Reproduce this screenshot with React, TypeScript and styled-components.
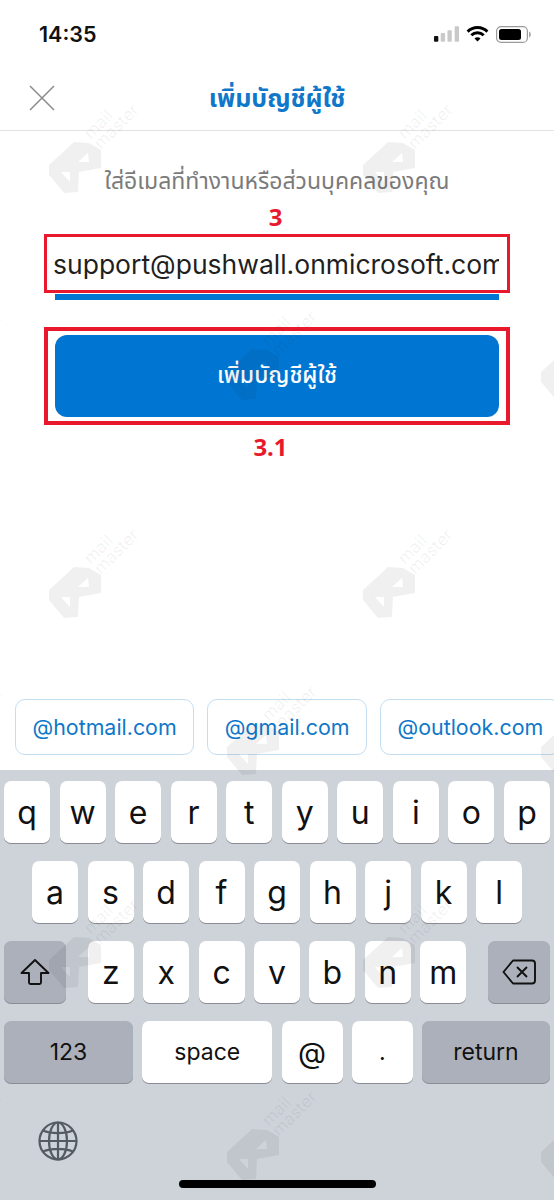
import { createGlobalStyle, styled } from 'styled-components';

const BLUE = '#0076d2';
const RED = '#e8192c';
const UI_FONT = 'Inter, "Noto Sans", "Noto Sans Thai", "Liberation Sans", sans-serif';
const LABEL_FONT = '"Noto Sans", "DejaVu Sans", sans-serif';

const MARKS = [
  [46, 140], [360, 140],
  [-90, 347], [224, 347], [538, 347],
  [46, 565], [360, 565],
  [-90, 722], [224, 722], [538, 722],
  [46, 935], [360, 935],
  [-90, 1127], [224, 1127], [538, 1127],
];

const ROW_ONE = ['q', 'w', 'e', 'r', 't', 'y', 'u', 'i', 'o', 'p'];
const ROW_TWO = ['a', 's', 'd', 'f', 'g', 'h', 'j', 'k', 'l'];
const ROW_THREE = ['z', 'x', 'c', 'v', 'b', 'n', 'm'];
const DOMAINS = ['@hotmail.com', '@gmail.com', '@outlook.com'];

export default function App() {
  return (
    <Page>
      <GlobalStyle />
      <StatusBar>
        <Clock>14:35</Clock>
        <StatusIcons>
          <svg width="25" height="16" viewBox="0 0 26 16">
            <rect x="0" y="10" width="4.5" height="6" rx="1" fill="#111" />
            <rect x="7" y="7" width="4.5" height="9" rx="1" fill="#c9c9c9" />
            <rect x="14" y="4" width="4.5" height="12" rx="1" fill="#c9c9c9" />
            <rect x="21.5" y="0" width="4.5" height="16" rx="1" fill="#c9c9c9" />
          </svg>
          <svg width="23" height="16" viewBox="0 0 23 16" fill="none" stroke="#000" strokeWidth="2.9">
            <path d="M1.6 5.6a14 14 0 0 1 19.8 0" />
            <path d="M5.3 9.3a8.8 8.8 0 0 1 12.4 0" />
            <path d="M11.5 15.6l-3-3a4.2 4.2 0 0 1 6 0z" fill="#000" stroke="none" />
          </svg>
          <svg width="35" height="17" viewBox="0 0 35 17">
            <rect x="0.6" y="0.6" width="30.8" height="15.8" rx="4.5" fill="none" stroke="#9a9a9a" strokeWidth="1.2" />
            <rect x="3" y="3" width="22" height="11" rx="2.5" fill="#000" />
            <path d="M33 5.5c1.2.4 1.8 1.6 1.8 3s-.6 2.6-1.8 3z" fill="#a5a5a5" />
          </svg>
        </StatusIcons>
      </StatusBar>

      <NavBar>
        <CloseIcon width="26" height="26" viewBox="0 0 26 26">
          <path d="M1 1l24 24M25 1L1 25" stroke="#8a8a8a" strokeWidth="1.5" fill="none" />
        </CloseIcon>
        <NavTitle>เพิ่มบัญชีผู้ใช้</NavTitle>
      </NavBar>

      <Content>
        <Prompt>ใส่อีเมลที่ทำงานหรือส่วนบุคคลของคุณ</Prompt>
        <StepLabel $shift={-3}>3</StepLabel>
        <InputFrame>
          <EmailText>support@pushwall.onmicrosoft.com</EmailText>
        </InputFrame>
        <Underline />
        <ButtonFrame>
          <AddButton>เพิ่มบัญชีผู้ใช้</AddButton>
        </ButtonFrame>
        <StepLabel $shift={-13} $top={5}>3.1</StepLabel>
      </Content>

      <ChipRow>
        {DOMAINS.map((domain) => (
          <Chip key={domain}>{domain}</Chip>
        ))}
      </ChipRow>

      <Keyboard>
        <KeyRow $inset={4}>
          {ROW_ONE.map((k) => (
            <Key key={k}>{k}</Key>
          ))}
        </KeyRow>
        <KeyRow $inset={32}>
          {ROW_TWO.map((k) => (
            <Key key={k}>{k}</Key>
          ))}
        </KeyRow>
        <KeyRow $inset={4}>
          <ActionKey $width={62}>
            <svg width="30" height="28" viewBox="0 0 30 28" fill="none" stroke="#111" strokeWidth="1.9" strokeLinejoin="round">
              <path d="M15 2L1.5 15h7.5v9.5a1.5 1.5 0 0 0 1.5 1.5h9a1.5 1.5 0 0 0 1.5-1.5V15h7.5z" />
            </svg>
          </ActionKey>
          <LetterGroup>
            {ROW_THREE.map((k) => (
              <Key key={k}>{k}</Key>
            ))}
          </LetterGroup>
          <ActionKey $width={62}>
            <svg width="34" height="26" viewBox="0 0 34 26" fill="none" stroke="#111" strokeWidth="1.9" strokeLinejoin="round">
              <path d="M11 1.5h19a3 3 0 0 1 3 3v17a3 3 0 0 1-3 3H11L1.5 13z" />
              <path d="M15 8l10 10M25 8L15 18" />
            </svg>
          </ActionKey>
        </KeyRow>
        <KeyRow $inset={4}>
          <ActionKey $width={129} $small>123</ActionKey>
          <Key $width={130} $small>space</Key>
          <Key $width={61}>
            <AtSign>@</AtSign>
          </Key>
          <Key $width={61} $small>.</Key>
          <ActionKey $width={128} $small>return</ActionKey>
        </KeyRow>
        <GlobeSlot>
          <svg width="40" height="40" viewBox="0 0 40 40" fill="none" stroke="#555b63" strokeWidth="2.2">
            <circle cx="20" cy="20" r="18.5" />
            <ellipse cx="20" cy="20" rx="9" ry="18.5" />
            <path d="M20 1.5v37M1.5 20h37M5 9.5c8 3.5 22 3.5 30 0M5 30.5c8-3.5 22-3.5 30 0" />
          </svg>
        </GlobeSlot>
        <HomeBar />
      </Keyboard>

      <MarkLayer>
        {MARKS.map(([x, y]) => (
          <Mark key={`${x}-${y}`} $x={x} $y={y} width="110" height="95" viewBox="0 -40 110 95">
            <path
              fillRule="evenodd"
              d="M3 25L28 2l15 1 12 7v18l-22 4-1 20-14 1L3 35zM32 22l10-9 1 9zM15 32h9v10z"
            />
            <MarkText transform="translate(45 0) rotate(-45)">mail</MarkText>
            <MarkText transform="translate(55 10) rotate(-45)">master</MarkText>
          </Mark>
        ))}
      </MarkLayer>
    </Page>
  );
}

const GlobalStyle = createGlobalStyle`
  html, body {
    margin: 0;
    background: #fff;
  }
`;

const Page = styled.div`
  position: relative;
  display: flex;
  flex-direction: column;
  width: 554px;
  height: 1200px;
  overflow: hidden;
  background: #fff;
  font-family: ${UI_FONT};
`;

const StatusBar = styled.div`
  display: flex;
  align-items: center;
  justify-content: space-between;
  height: 68px;
  padding: 0 23px 0 39px;
  box-sizing: border-box;
`;

const Clock = styled.span`
  font-size: 21.5px;
  font-weight: 600;
  color: #111;
`;

const StatusIcons = styled.div`
  display: flex;
  align-items: center;
  gap: 7px;
`;

const NavBar = styled.div`
  position: relative;
  display: flex;
  align-items: center;
  justify-content: center;
  height: 63px;
  box-sizing: border-box;
  border-bottom: 1px solid #e2e2e2;
`;

const CloseIcon = styled.svg`
  position: absolute;
  left: 29px;
  top: 17px;
`;

const NavTitle = styled.h1`
  margin: 0;
  font-size: 25px;
  font-weight: 700;
  color: #0f78c9;
`;

const Content = styled.div`
  display: flex;
  flex-direction: column;
  align-items: stretch;
  flex: 1;
  padding: 32px 44px 0;
`;

const Prompt = styled.p`
  margin: 0;
  height: 37px;
  line-height: 37px;
  font-size: 23px;
  color: #7b7b7b;
  text-align: center;
`;

const StepLabel = styled.div<{ $shift?: number; $top?: number }>`
  height: 34px;
  line-height: 34px;
  margin-top: ${(p) => p.$top ?? 0}px;
  margin-left: ${(p) => p.$shift ?? 0}px;
  font-family: ${LABEL_FONT};
  font-size: 24px;
  font-weight: 700;
  color: ${RED};
  text-align: center;
`;

const InputFrame = styled.div`
  display: flex;
  align-items: center;
  height: 59px;
  padding: 0 8px 0 6px;
  box-sizing: border-box;
  border: 3px solid ${RED};
  overflow: hidden;
`;

const EmailText = styled.span`
  display: block;
  width: 100%;
  overflow: hidden;
  white-space: nowrap;
  font-size: 26.5px;
  color: #1f1f1f;
`;

const Underline = styled.div`
  height: 6px;
  margin: 1px 11px 27px;
  background: ${BLUE};
`;

const ButtonFrame = styled.div`
  display: flex;
  height: 98px;
  padding: 4px 7px;
  box-sizing: border-box;
  border: 4px solid ${RED};
`;

const AddButton = styled.button`
  flex: 1;
  border: 0;
  border-radius: 12px;
  background: ${BLUE};
  color: #fff;
  font-family: inherit;
  font-size: 23px;
  font-weight: 500;
`;

const ChipRow = styled.div`
  display: flex;
  gap: 13px;
  height: 71px;
  padding-left: 15px;
  overflow: hidden;
`;

const Chip = styled.div`
  display: flex;
  flex: none;
  align-items: center;
  height: 56px;
  padding: 0 16.5px;
  box-sizing: border-box;
  border: 1px solid #c4def1;
  border-radius: 10px;
  font-size: 21.4px;
  color: #0f78c9;
`;

const Keyboard = styled.div`
  display: flex;
  flex-direction: column;
  gap: 18px;
  height: 430px;
  padding-top: 11px;
  box-sizing: border-box;
  background: #ced2d9;
`;

const KeyRow = styled.div<{ $inset: number }>`
  display: flex;
  justify-content: space-between;
  height: 62px;
  padding: 0 ${(p) => p.$inset}px;
`;

const LetterGroup = styled.div`
  display: flex;
  gap: 9.4px;
`;

const Key = styled.div<{ $width?: number; $small?: boolean }>`
  display: flex;
  flex: none;
  align-items: center;
  justify-content: center;
  width: ${(p) => p.$width ?? 46}px;
  height: 62px;
  border-radius: 7px;
  background: #fff;
  box-shadow: 0 1px 0 #898c92;
  font-size: ${(p) => (p.$small ? 23 : 32)}px;
  color: #111;
`;

const ActionKey = styled(Key)`
  background: #abb0ba;
`;

const AtSign = styled.span`
  font-size: 29px;
`;

const GlobeSlot = styled.div`
  display: flex;
  align-items: center;
  height: 40px;
  margin-top: 20px;
  padding-left: 38px;
`;

const HomeBar = styled.div`
  width: 197px;
  height: 8px;
  margin: 1px auto 0;
  border-radius: 4px;
  background: #000;
`;

const MarkLayer = styled.div`
  position: absolute;
  inset: 0;
  pointer-events: none;
`;

const Mark = styled.svg<{ $x: number; $y: number }>`
  position: absolute;
  left: ${(p) => p.$x}px;
  top: ${(p) => p.$y - 40}px;
  fill: rgba(0, 0, 0, 0.06);
`;

const MarkText = styled.text`
  font-family: Inter, sans-serif;
  font-size: 17px;
  font-weight: 400;
`;
